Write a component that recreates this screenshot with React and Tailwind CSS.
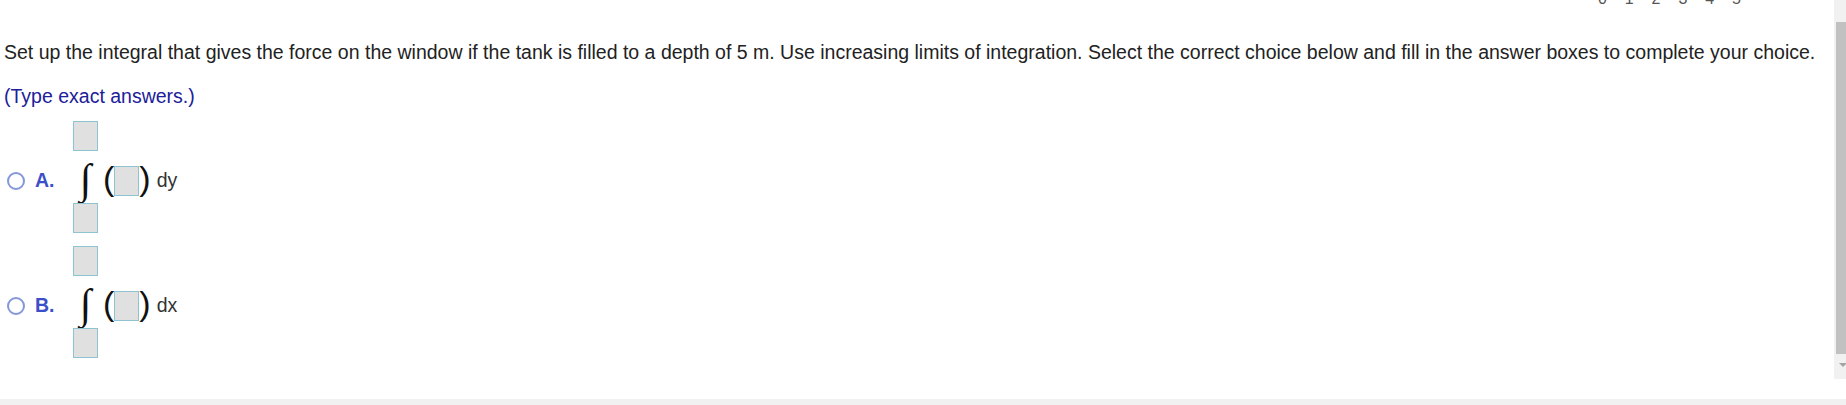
import React from 'react';

// answer box (empty input)
const Box = ({ className = '' }) => (
  <div className={`w-[25px] h-[30px] bg-[#e0e0e0] border border-[#8ec3d2] shrink-0 ${className}`} />
);

const Choice = ({ letter, variable, className = '' }) => (
  <div className={`flex items-center ${className}`}>
    <span className="ml-[7px] w-[18px] h-[18px] rounded-full border-2 border-[#8497dd] bg-white shrink-0" />
    <span className="ml-[10px] w-[19px] text-[19.5px] font-bold text-[#3b4fc8] leading-none">{letter}.</span>
    {/* integral with limits */}
    <div className="ml-[19px] mb-[7px] flex flex-col items-center w-[25px] shrink-0">
      <Box />
      <div className="mt-[6px] h-[43px] flex items-center justify-center font-['Liberation_Serif',serif] text-[42px] leading-none text-[#111]">
        ∫
      </div>
      <Box className="mt-[3px]" />
    </div>
    <span className="ml-[5px] text-[34px] leading-none text-[#111] -translate-y-[3px]">(</span>
    <Box />
    <span className="text-[34px] leading-none text-[#111] -translate-y-[3px]">)</span>
    <span className="ml-[6px] text-[19.5px] leading-none text-[#333]">{variable}</span>
  </div>
);

const App = () => {
  const ticks = ['0', '1', '2', '3', '4', '5'];

  return (
    <div className="w-[1846px] h-[405px] overflow-hidden bg-white flex flex-col font-['Liberation_Sans',Arial,sans-serif]">
      <div className="flex h-[379px] shrink-0">
        {/* 본문 */}
        <div className="w-[1834px] shrink-0 overflow-hidden">
          {/* cut-off axis labels from the graph above */}
          <div className="flex h-[16px] -mt-[9px] pl-[1598px] text-[16px] leading-[16px] text-[#555]">
            {ticks.map((t) => (
              <span key={t} className="w-[26.8px]">{t}</span>
            ))}
          </div>

          <p className="mt-[34px] pl-[4px] text-[19.5px] leading-[22px] text-[#222] whitespace-nowrap">
            Set up the integral that gives the force on the window if the tank is filled to a depth of 5 m. Use increasing limits of integration. Select the correct choice below and fill in the answer boxes to complete your choice.
          </p>
          <p className="mt-[22px] pl-[4px] text-[19.5px] leading-[22px] text-[#20209a]">
            (Type exact answers.)
          </p>

          <Choice letter="A" variable="dy" className="mt-[14px]" />
          <Choice letter="B" variable="dx" className="mt-[6px]" />
        </div>

        {/* scrollbar */}
        <div className="w-[17px] shrink-0 bg-[#f1f1f1] flex flex-col items-center">
          <div className="h-[22px]" />
          <div className="w-[13px] h-[332px] bg-[#c1c1c1]" />
          <div className="mt-[9px] w-0 h-0 border-l-[4px] border-r-[4px] border-t-[4px] border-l-transparent border-r-transparent border-t-[#a3a3a3]" />
        </div>
      </div>
      <div className="h-[20px] shrink-0" />
      <div className="h-[6px] shrink-0 bg-[#f1f1f1]" />
    </div>
  );
};

export default App;
